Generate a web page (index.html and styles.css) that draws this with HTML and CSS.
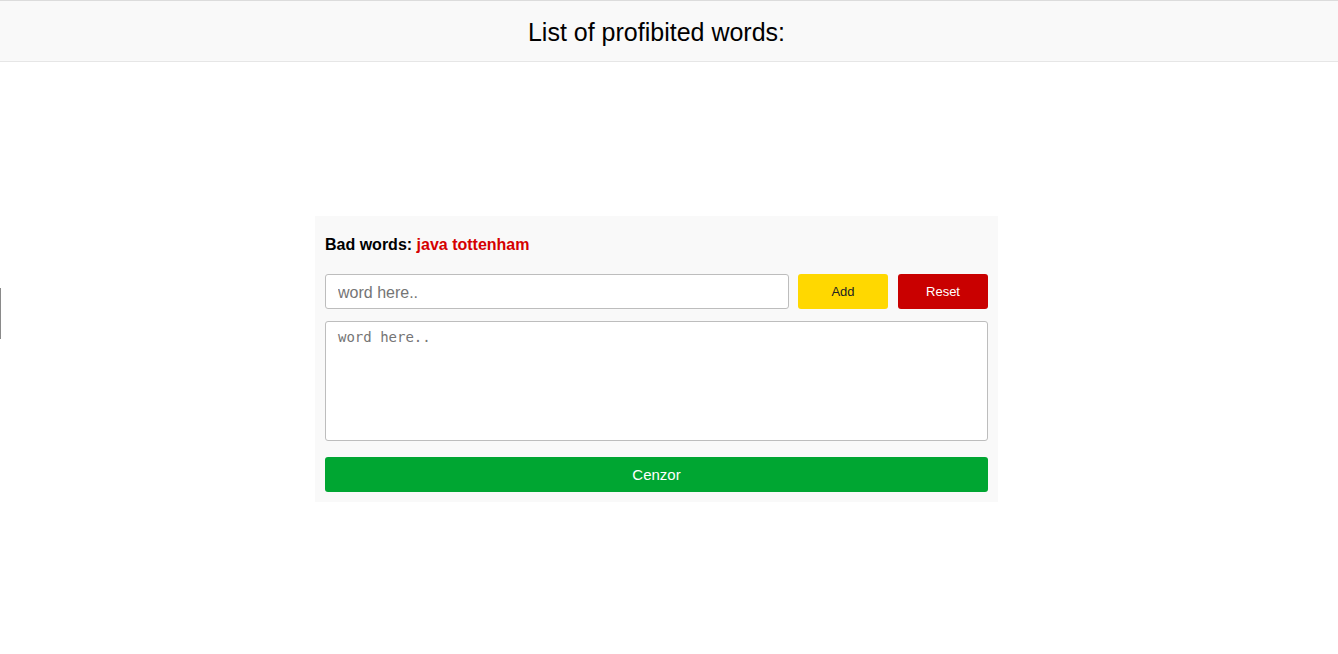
FILE: index.html
```html
<!DOCTYPE html>
<html>
<head>
<meta charset="utf-8">
<link rel="stylesheet" href="styles.css">
</head>
<body>
<header class="header">
  <h1 class="title">List of profibited words:</h1>
</header>
<div class="edge-mark"></div>
<main class="page">
  <section class="card">
    <p class="bad-line">Bad words: <span class="bad-list">java tottenham</span></p>
    <div class="input-row">
      <input class="word-input" type="text" placeholder="word here..">
      <button class="btn btn-add">Add</button>
      <button class="btn btn-reset">Reset</button>
    </div>
    <textarea class="text-area" placeholder="word here.."></textarea>
    <button class="btn btn-cenzor">Cenzor</button>
  </section>
</main>
</body>
</html>
```
FILE: styles.css
```css
html, body {
  margin: 0;
  padding: 0;
  background: #ffffff;
  font-family: "Liberation Sans", Arial, sans-serif;
  color: #000;
}
.header {
  width: 1313px;
  height: 60px;
  background: #f9f9f9;
  border-top: 1px solid #dcdcdc;
  border-bottom: 1px solid #e6e6e6;
  display: flex;
  align-items: center;
  justify-content: center;
  position: relative;
}
.header::after {
  content: "";
  position: absolute;
  left: 1313px;
  top: -1px;
  width: 25px;
  height: 62px;
  border-top: 1px solid #dcdcdc;
  border-bottom: 1px solid #e6e6e6;
  background: #f9f9f9;
  box-sizing: border-box;
}
.title {
  margin: 0;
  font-size: 25px;
  font-weight: normal;
  line-height: 28px;
  padding-top: 1px;
}
.edge-mark {
  position: absolute;
  left: 0;
  top: 288px;
  width: 1px;
  height: 51px;
  background: #8a8a8a;
}
.page {
  padding-top: 154px;
  padding-left: 315px;
}
.card {
  width: 683px;
  box-sizing: border-box;
  background: #f9f9f9;
  padding: 10px;
  display: flex;
  flex-direction: column;
}
.bad-line {
  margin: 10px 0 0 0;
  font-size: 16px;
  line-height: 18px;
  font-weight: bold;
}
.bad-list {
  color: #d50000;
}
.input-row {
  margin-top: 20px;
  display: flex;
  gap: 9px;
}
.word-input {
  width: 464px;
  height: 35px;
  box-sizing: border-box;
  border: 1px solid #bdbdbd;
  border-radius: 3px;
  padding: 3px 12px 0 12px;
  font-family: "Liberation Sans", Arial, sans-serif;
  font-size: 16px;
  background: #fff;
}
.word-input::placeholder {
  color: #757575;
}
.btn {
  border: none;
  border-radius: 3px;
  height: 35px;
  font-family: "Liberation Sans", Arial, sans-serif;
  cursor: pointer;
  padding: 0;
}
.btn-add {
  width: 90px;
  background: #ffd800;
  color: #222;
  font-size: 13px;
}
.btn-reset {
  width: 90px;
  margin-left: 1px;
  background: #c90000;
  color: #fff;
  font-size: 13px;
}
.text-area {
  margin-top: 12px;
  width: 663px;
  height: 120px;
  box-sizing: border-box;
  border: 1px solid #bdbdbd;
  border-radius: 3px;
  padding: 7px 12px;
  font-family: "DejaVu Sans Mono", "Liberation Mono", monospace;
  font-size: 14px;
  resize: none;
  background: #fff;
  display: block;
}
.text-area::placeholder {
  color: #757575;
}
.btn-cenzor {
  margin-top: 16px;
  width: 663px;
  background: #00a632;
  color: #fff;
  font-size: 15px;
}
```
